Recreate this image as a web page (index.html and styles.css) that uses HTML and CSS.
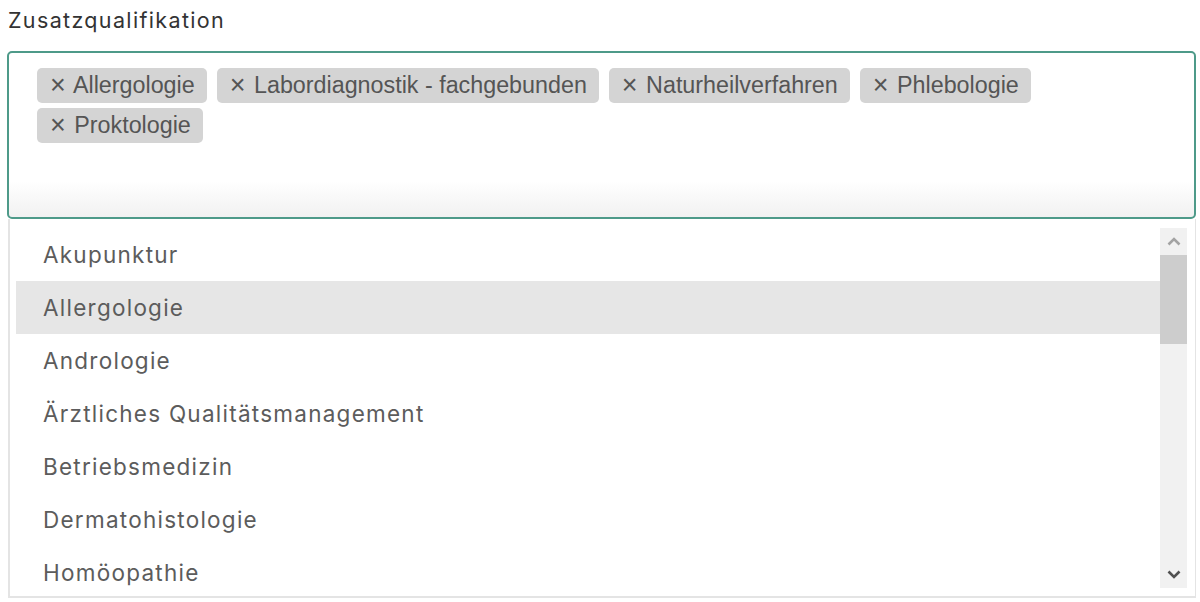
FILE: index.html
```html
<!DOCTYPE html>
<html lang="de">
<head>
<meta charset="utf-8">
<title>Zusatzqualifikation</title>
<link rel="stylesheet" href="styles.css">
</head>
<body>
<div class="field">
  <label class="label">Zusatzqualifikation</label>
  <div class="select-box">
    <div class="tags">
      <span class="tag"><span class="x">×</span> Allergologie</span>
      <span class="tag"><span class="x">×</span> Labordiagnostik - fachgebunden</span>
      <span class="tag"><span class="x">×</span> Naturheilverfahren</span>
      <span class="tag"><span class="x">×</span> Phlebologie</span>
      <span class="tag"><span class="x">×</span> Proktologie</span>
    </div>
  </div>
  <div class="dropdown">
    <ul class="options">
      <li class="option">Akupunktur</li>
      <li class="option selected">Allergologie</li>
      <li class="option">Andrologie</li>
      <li class="option">Ärztliches Qualitätsmanagement</li>
      <li class="option">Betriebsmedizin</li>
      <li class="option">Dermatohistologie</li>
      <li class="option">Homöopathie</li>
    </ul>
    <div class="scrollbar">
      <div class="sb-btn">
        <svg width="14" height="9" viewBox="0 0 14 9"><path d="M1.5 7.5 L7 2 L12.5 7.5" fill="none" stroke="#a3a3a3" stroke-width="2.6"/></svg>
      </div>
      <div class="sb-thumb"></div>
      <div class="sb-track"></div>
      <div class="sb-btn">
        <svg width="14" height="9" viewBox="0 0 14 9"><path d="M1.5 1.5 L7 7 L12.5 1.5" fill="none" stroke="#505050" stroke-width="2.6"/></svg>
      </div>
    </div>
  </div>
</div>
</body>
</html>
```
FILE: styles.css
```css
html, body {
  margin: 0;
  padding: 0;
  background: #ffffff;
}

.field {
  width: 1189px;
  margin-left: 7px;
  padding-top: 5px;
}

.label {
  display: block;
  margin-left: 1px;
  height: 30px;
  line-height: 30px;
  font-family: "Inter", "Open Sans", sans-serif;
  font-size: 21.5px;
  color: #333333;
  letter-spacing: 1.35px;
}

.select-box {
  margin-top: 16px;
  box-sizing: border-box;
  height: 168px;
  border: 2px solid #4e9a89;
  border-radius: 5px;
  background: linear-gradient(to bottom, #ffffff 0, #ffffff 128px, #f1f1f1 164px);
  padding: 15px 20px 0 28px;
}

.tags {
  display: flex;
  flex-wrap: wrap;
  column-gap: 10px;
  row-gap: 5px;
}

.tag {
  display: inline-flex;
  align-items: center;
  height: 35px;
  padding: 0 12px 0 13px;
  background: #d4d4d4;
  border-radius: 5px;
  font-family: "Liberation Sans", Arial, sans-serif;
  font-size: 23.3px;
  color: #555555;
  white-space: pre;
}

.x {
  color: #555555;
  font-size: 27px;
  line-height: 1;
  margin-right: 2px;
}

.dropdown {
  margin-left: 1px;
  box-sizing: border-box;
  height: 379px;
  border: 2px solid #e4e4e4;
  border-top: none;
  border-right-width: 1px;
  display: flex;
  padding: 9px 8px 0 6px;
  overflow: hidden;
}

.options {
  list-style: none;
  margin: 0;
  padding: 0;
  flex: 1;
  height: 368px;
  overflow: hidden;
}

.option {
  height: 53px;
  line-height: 53px;
  padding-left: 27px;
  font-family: "Inter", "Open Sans", sans-serif;
  font-size: 22.5px;
  color: #5c5c5c;
  letter-spacing: 1.25px;
}

.option.selected {
  background: #e6e6e6;
}

.scrollbar {
  width: 27px;
  height: 360px;
  display: flex;
  flex-direction: column;
  background: #f1f1f1;
}

.sb-btn {
  height: 27px;
  display: flex;
  align-items: center;
  justify-content: center;
}

.sb-thumb {
  height: 89px;
  background: #cdcdcd;
}

.sb-track {
  flex: 1;
}
```
